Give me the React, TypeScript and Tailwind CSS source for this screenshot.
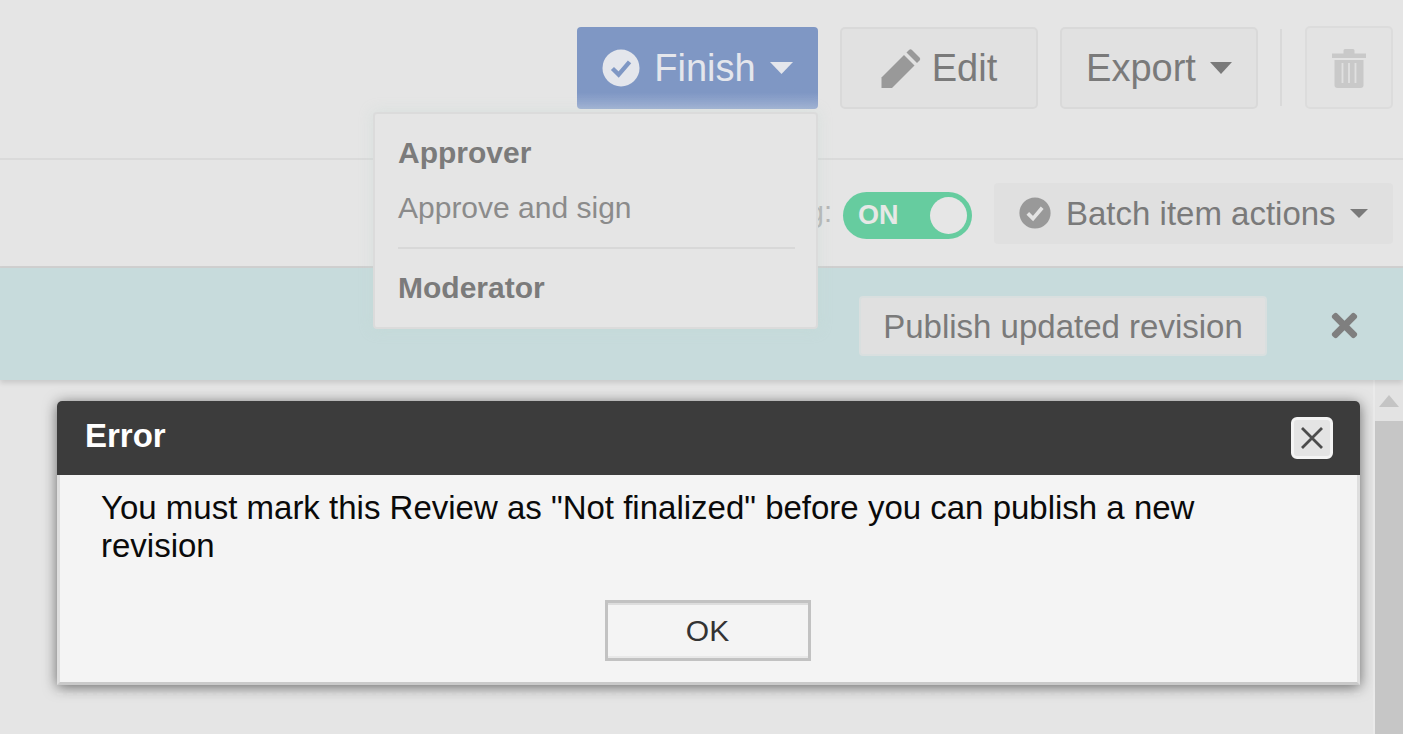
import React from "react";
import { FaTimes } from "react-icons/fa";

const font = { fontFamily: '"Liberation Sans", Arial, sans-serif' };

function Caret({ w, h, color, className }: { w: number; h: number; color: string; className?: string }) {
  return (
    <svg width={w} height={h} viewBox="0 0 10 6" preserveAspectRatio="none" className={className}>
      <polygon points="0,0 10,0 5,6" fill={color} />
    </svg>
  );
}

function CheckCircle({ size, fill, stroke }: { size: number; fill: string; stroke: string }) {
  return (
    <svg width={size} height={size} viewBox="0 0 40 40">
      <circle cx="20" cy="20" r="19.5" fill={fill} />
      <polyline points="11,20.5 17.5,27 29,13.5" fill="none" stroke={stroke} strokeWidth="4.6" />
    </svg>
  );
}

function Pencil() {
  return (
    <svg width="40" height="41" viewBox="0 0 40 40">
      <path d="M0.500 29L23 6.500L33.500 17L11 39.500L0.500 39.500z" fill="#999999" />
      <path d="M25.500 4L28 1.500Q29.500 0 31 1.500L38.500 9Q40 10.500 38.500 12L36 14.500z" fill="#999999" />
    </svg>
  );
}

function Trash() {
  return (
    <svg width="34" height="40" viewBox="0 0 34 40">
      <path d="M0 5.500h11.500V2.500q0-1.500 1.500-1.500h8q1.500 0 1.500 1.500V5.500H34V10H0z" fill="#c9c9c9" />
      <path d="M2.500 12h29v25q0 3-3 3h-23q-3 0-3-3z" fill="#c9c9c9" />
      <path d="M10.500 15v20M17 15v20M23.500 15v20" stroke="#e0e0e0" strokeWidth="1.800" />
    </svg>
  );
}

export default function App() {
  return (
    <div style={font} className="relative flex h-[734px] w-[1403px] flex-col overflow-hidden bg-[#e5e5e5]">
      {/* Top toolbar */}
      <div className="flex h-[160px] shrink-0 items-start justify-end border-b-2 border-[#dadada] pr-[10px] pt-[27px]">
        <button className="flex h-[82px] w-[241px] items-center justify-center gap-[14px] rounded-[4px] bg-gradient-to-b from-[#7f97c4] from-[80%] to-[#9fb0d3] text-[38px] text-[#e4e6ec]">
          <CheckCircle size={38} fill="#e4e6ec" stroke="#7f97c4" />
          <span>Finish</span>
          <Caret w={23} h={12} color="#e4e6ec" />
        </button>
        <button className="ml-[22px] flex h-[82px] w-[198px] items-center justify-center gap-[11px] rounded-[5px] border-2 border-[#d9d9d9] bg-[#e1e1e1] text-[38px] text-[#7a7a7a]">
          <Pencil />
          <span>Edit</span>
        </button>
        <button className="ml-[22px] flex h-[82px] w-[198px] items-center justify-center gap-[14px] rounded-[5px] border-2 border-[#d9d9d9] bg-[#e1e1e1] text-[38px] text-[#7a7a7a]">
          <span>Export</span>
          <Caret w={22} h={12} color="#7a7a7a" />
        </button>
        <div className="ml-[22px] mt-[2px] h-[77px] w-[2px] bg-[#d9d9d9]" />
        <button className="ml-[23px] -mt-px flex h-[83px] w-[88px] items-center justify-center rounded-[5px] border-2 border-[#dcdcdc] bg-[#e3e3e3]">
          <Trash />
        </button>
      </div>

      {/* Second toolbar */}
      <div className="flex h-[108px] shrink-0 items-center justify-end border-b-2 border-[#d0d0d0] pr-[10px]">
        <span className="mr-[11px] text-[29px] text-[#b5b5b5]">Grouping:</span>
        <div className="mt-[5px] flex h-[47px] w-[129px] items-center justify-between rounded-full bg-[#66cc9f] pl-[15px] pr-[5px]">
          <span className="text-[27px] font-bold text-[#e6e8e6]">ON</span>
          <span className="h-[37px] w-[37px] rounded-full bg-[#e6e6e6]" />
        </div>
        <button className="ml-[22px] flex h-[61px] w-[399px] items-center rounded-[4px] bg-[#e0e0e0] pl-[25px] text-[33px] text-[#7a7a7a]">
          <CheckCircle size={32} fill="#999999" stroke="#e4e4e4" />
          <span className="ml-[15px] mt-[2px]">Batch item actions</span>
          <Caret w={18} h={9} color="#7a7a7a" className="ml-[14px]" />
        </button>
      </div>

      {/* Banner */}
      <div className="z-10 flex h-[112px] shrink-0 items-center justify-end bg-[#c7dbdc] pr-[40px] pt-[3px] shadow-[0_3px_5px_rgba(0,0,0,0.12)]">
        <button className="flex h-[60px] w-[408px] items-center justify-center rounded-[4px] border-2 border-[#d9dfdf] bg-[#e0e0e0] pt-[2px] text-[33px] text-[#7a7a7a]">
          Publish updated revision
        </button>
        <FaTimes size={37} color="#7f7f7f" className="ml-[59px]" />
      </div>

      {/* Content + scrollbar */}
      <div className="flex min-h-0 flex-1 justify-end">
        <div className="flex w-[30px] flex-col border-l-2 border-[#eaeaea] bg-[#e3e3e3]">
          <div className="flex h-[41px] shrink-0 items-start justify-center pt-[15px]">
            <svg width="20" height="12" viewBox="0 0 20 12">
              <polygon points="0,12 20,12 10,0" fill="#c4c4c4" />
            </svg>
          </div>
          <div className="flex-1 bg-[#c6c6c6]" />
        </div>
      </div>

      {/* Dropdown menu */}
      <div className="absolute left-[373px] top-[112px] z-20 flex h-[217px] w-[445px] flex-col rounded-[4px] border-2 border-[#dbdbdb] bg-[#e5e5e5] pl-[23px] pr-[21px] pt-[21px] shadow-[0_0_14px_rgba(190,215,205,0.35)]">
        <div className="text-[30px] font-bold leading-[36px] text-[#7b7b7b]">Approver</div>
        <div className="mt-[19px] text-[30px] leading-[36px] text-[#8b8b8b]">Approve and sign</div>
        <div className="mt-[21px] h-[2px] bg-[#d8d8d8]" />
        <div className="mt-[21px] text-[30px] font-bold leading-[36px] text-[#7b7b7b]">Moderator</div>
      </div>

      {/* Error dialog */}
      <div className="absolute left-[57px] top-[401px] z-30 w-[1303px] border-b-2 border-dashed border-[#e8e8e8] pb-[8px]">
        <div className="flex h-[284px] flex-col overflow-hidden rounded-t-[5px] bg-[#f4f4f4] shadow-[0_2px_14px_rgba(0,0,0,0.55)]">
          <div className="flex h-[74px] shrink-0 items-center justify-between bg-[#3c3c3c] pb-[4px] pl-[28px] pr-[27px]">
            <span className="text-[33px] font-bold text-white">Error</span>
            <button className="mt-[3px] flex h-[42px] w-[42px] items-center justify-center rounded-[6px] border-[3px] border-[#f4f4f4] bg-[#e4e4e4]">
              <svg width="26" height="26" viewBox="0 0 26 26">
                <path d="M3 3L23 23M23 3L3 23" stroke="#4c4c4c" strokeWidth="2.800" fill="none" />
              </svg>
            </button>
          </div>
          <div className="flex flex-1 flex-col border-x-[3px] border-b-[3px] border-x-[#dedede] border-b-[#c9c9c9] px-[41px] pt-[14px]">
            <p className="text-[33px] leading-[38px] text-[#0a0a0a]">
              You must mark this Review as "Not finalized" before you can publish a new revision
            </p>
            <button className="mx-auto mt-[35px] flex h-[61px] w-[206px] -translate-x-px items-center justify-center border-[3px] border-[#c2c2c2] bg-[#f4f4f4] text-[30px] text-[#333333] shadow-[inset_0_5px_0_-3px_#dddddd,inset_0_-5px_0_-3px_#e8e8e8]">
              OK
            </button>
          </div>
        </div>
      </div>
    </div>
  );
}
